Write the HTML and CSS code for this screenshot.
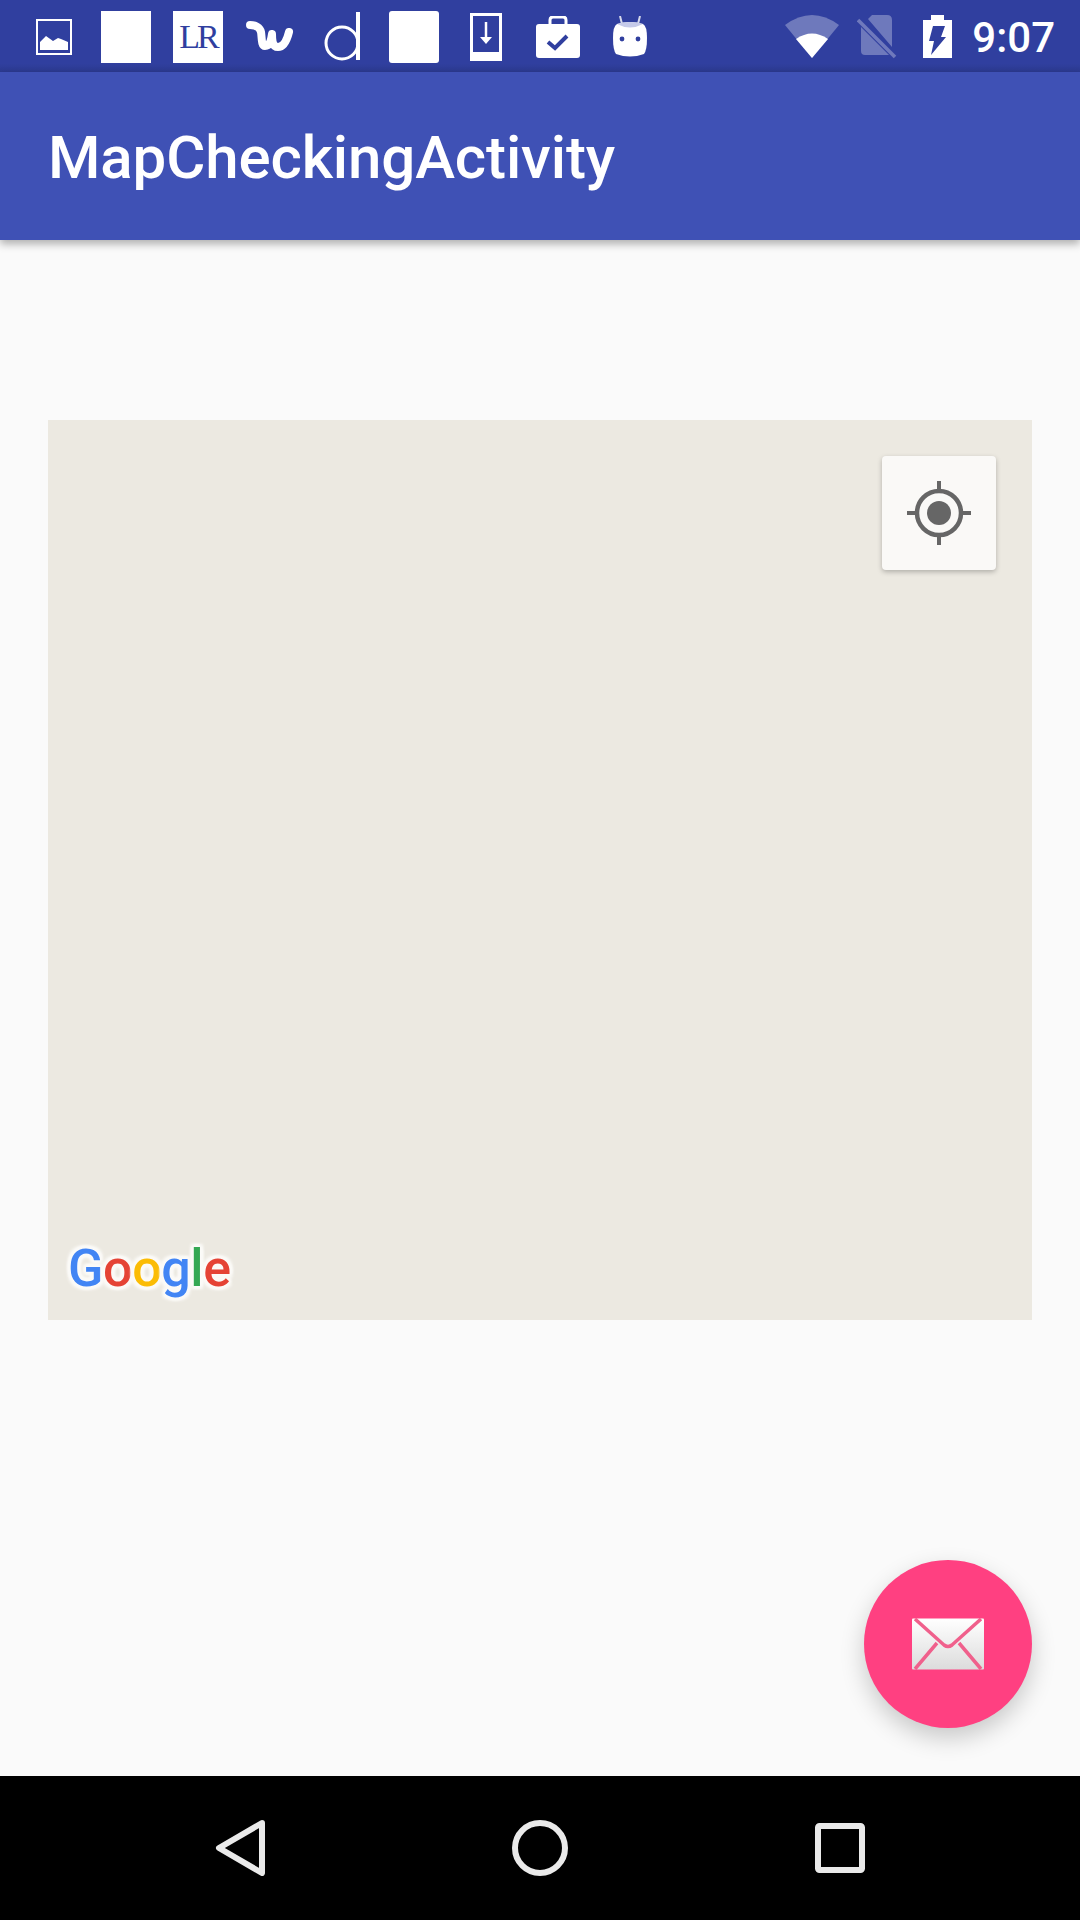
FILE: index.html
```html
<!DOCTYPE html>
<html>
<head>
    <meta charset="utf-8">
    <meta name="viewport" content="width=device-width, initial-scale=1.0">
    <title>MapCheckingActivity</title>
    <link rel="stylesheet" href="styles.css">
</head>
<body>
<div class="status-bar">
    <div class="notifications">
        <div class="slot">
            <svg width="36" height="36" viewBox="0 0 36 36"><path d="M1 1h34v34H1z" fill="none" stroke="#fff" stroke-width="2"/><path d="M4 31V23l6-6 7 5 5-3 3 1 7 3v8z" fill="#fff"/></svg>
        </div>
        <div class="slot"><div class="blank"></div></div>
        <div class="slot"><div class="blank lr">LR</div></div>
        <div class="slot">
            <svg width="48" height="36" viewBox="0 0 48 36"><path d="M4 6c5 0 10 2 11 7 1 5 0 14 4 14 5 0 6-5 7-12 0 6 0 13 6 13 6 0 9-7 11-15" fill="none" stroke="#fff" stroke-width="8" stroke-linecap="round" stroke-linejoin="round"/></svg>
        </div>
        <div class="slot">
            <svg width="36" height="50" viewBox="0 0 36 50"><circle cx="18" cy="31" r="16" fill="none" stroke="#fff" stroke-width="3"/><path d="M34 0v48" stroke="#fff" stroke-width="4"/></svg>
        </div>
        <div class="slot"><div class="blank rounded"></div></div>
        <div class="slot">
            <svg width="32" height="48" viewBox="0 0 32 48"><path fill-rule="evenodd" d="M0 0h32v48H0zM3 3v36h26V3z" fill="#fff"/><path d="M16 9v18" stroke="#fff" stroke-width="2.5"/><path d="M10 24h12l-6 7z" fill="#fff"/></svg>
        </div>
        <div class="slot">
            <svg width="44" height="42" viewBox="0 0 44 42"><path d="M14 9V4q0-3 3-3h10q3 0 3 3v5" fill="none" stroke="#fff" stroke-width="3"/><path d="M3 8h38q3 0 3 3v28q0 3-3 3H3q-3 0-3-3V11q0-3 3-3z" fill="#fff"/><path d="M12 26l7 6 12-12" fill="none" stroke="#303f9f" stroke-width="4"/></svg>
        </div>
        <div class="slot">
            <svg width="34" height="42" viewBox="0 0 34 42"><path d="M7 0l2 8M27 0l-2 8" stroke="#fff" stroke-width="2" opacity=".8"/><path d="M4 8q13-4 26 0 4 2 4 14 0 12-3 16-14 5-28 0-3-4-3-16 0-12 4-14z" fill="#fff"/><path d="M4 8q13-4 26 0-13 7-26 0z" fill="#c5cae9"/><circle cx="9" cy="23" r="2.4" fill="#303f9f"/><circle cx="25" cy="23" r="2.4" fill="#303f9f"/></svg>
        </div>
    </div>
    <div class="system-icons">
        <svg class="wifi" width="54" height="44" viewBox="0 0 54 44"><path d="M0 10Q27-10 54 10L27 43z" fill="#fff" opacity=".3"/><path d="M11 24Q27 13 43 24L27 43z" fill="#fff"/></svg>
        <svg class="sim" width="40" height="44" viewBox="0 0 40 44"><path d="M11 4l4-4h15q5 0 5 5v27zM4 12l28 28H8q-4 0-4-4z" fill="#fff" opacity=".3"/><path d="M1 5l37 37" stroke="#fff" stroke-width="3.5" opacity=".3"/></svg>
        <svg class="battery" width="29" height="44" viewBox="0 0 29 44"><path fill-rule="evenodd" d="M8 0h13v5h8v38H0V5h8zM10 11h12l-4 11h5L8 40l3-14H6z" fill="#fff"/></svg>
        <span class="clock">9:07</span>
    </div>
</div>
<div class="app-bar">MapCheckingActivity</div>
<div class="content">
    <div class="map">
        <div class="location-btn">
            <svg width="64" height="64" viewBox="0 0 64 64"><circle cx="32" cy="32" r="22" fill="none" stroke="#666" stroke-width="4.5"/><circle cx="32" cy="32" r="12" fill="#666"/><path d="M32 0v10M32 54v10M0 32h10M54 32h10" stroke="#666" stroke-width="4"/></svg>
        </div>
        <div class="google"><span class="blue">G</span><span class="red">o</span><span class="yellow">o</span><span class="blue">g</span><span class="green">l</span><span class="red">e</span></div>
    </div>
    <button class="fab">
        <svg class="envelope" width="72" height="52" viewBox="0 0 72 52">
            <defs><linearGradient id="env" x1="0" y1="0" x2="0" y2="1"><stop offset="0" stop-color="#fff"/><stop offset="1" stop-color="#dcdcdc"/></linearGradient></defs>
            <rect width="72" height="51" y="0.5" rx="1" fill="url(#env)"/>
            <path d="M3 1l29 26q4 3 8 0L69 1M3 51l22-26M69 51L47 25" fill="none" stroke="#f0608c" stroke-width="3.5"/>
        </svg>
    </button>
</div>
<div class="nav-bar">
    <div class="nav-slot">
        <svg width="50" height="56" viewBox="0 0 50 56"><path d="M47 3L4 28l43 25z" fill="none" stroke="#eaeaea" stroke-width="6" stroke-linejoin="round"/></svg>
    </div>
    <div class="nav-slot">
        <svg width="56" height="56" viewBox="0 0 56 56"><circle cx="28" cy="28" r="25" fill="none" stroke="#eaeaea" stroke-width="6"/></svg>
    </div>
    <div class="nav-slot">
        <svg width="50" height="50" viewBox="0 0 50 50"><rect x="3" y="3" width="44" height="44" rx="1.5" fill="none" stroke="#eaeaea" stroke-width="6"/></svg>
    </div>
</div>
</body>
</html>
```

FILE: styles.css
```css
/* Page frame */
html, body {
    margin: 0;
    height: 100%;
}
body {
    display: flex;
    flex-direction: column;
    height: 1920px;
    font-family: Roboto, "Liberation Sans", sans-serif;
    background: #fafafa;
    overflow: hidden;
}
/* Status bar */
.status-bar {
    display: flex;
    justify-content: space-between;
    align-items: center;
    height: 72px;
    padding: 2px 25px 0 18px;
    box-sizing: border-box;
    background: linear-gradient(#303f9f 88%, #2c3a90);
    flex-shrink: 0;
}
.notifications {
    display: flex;
    align-items: center;
}
.slot {
    display: flex;
    justify-content: center;
    align-items: center;
    width: 72px;
    height: 52px;
}
.blank {
    width: 50px;
    height: 52px;
    background: #fff;
}
.blank.rounded {
    border-radius: 3px;
}
.lr {
    font-family: "Liberation Serif", serif;
    font-size: 34px;
    line-height: 52px;
    text-align: center;
    color: #303f9f;
    letter-spacing: -3px;
}
.system-icons {
    display: flex;
    align-items: center;
}
.sim {
    margin-left: 18px;
}
.battery {
    margin-left: 26px;
}
.clock {
    margin-left: 20px;
    font-size: 42px;
    font-weight: 500;
    color: #fff;
}
/* App bar */
.app-bar {
    position: relative;
    height: 168px;
    padding-left: 48px;
    line-height: 172px;
    font-size: 60px;
    font-weight: 500;
    letter-spacing: -0.12px;
    color: #fff;
    background: #3f51b5;
    box-shadow: 0 4px 8px rgba(0, 0, 0, 0.3);
    flex-shrink: 0;
}
/* Map area */
.content {
    position: relative;
    flex: 1;
    padding: 180px 48px 0;
}
.map {
    position: relative;
    height: 900px;
    background: #ece9e1;
}
.location-btn {
    position: absolute;
    top: 36px;
    right: 36px;
    display: flex;
    justify-content: center;
    align-items: center;
    width: 114px;
    height: 114px;
    background: #faf9f7;
    border-radius: 4px;
    box-shadow: 0 2px 5px rgba(0, 0, 0, 0.25);
}
.google {
    position: absolute;
    left: 20px;
    bottom: 21px;
    font-size: 52px;
    font-weight: 500;
    line-height: 60px;
    letter-spacing: -0.4px;
    text-shadow: 0 0 2px #fff, 3px 0 2px #fbfaf7, -3px 0 2px #fbfaf7, 0 3px 2px #fbfaf7, 0 -3px 2px #fbfaf7, 3px 3px 3px #fbfaf7, -3px -3px 3px #fbfaf7, 3px -3px 3px #fbfaf7, -3px 3px 3px #fbfaf7;
}
.blue { color: #4285f4; }
.red { color: #e54335; }
.yellow { color: #fbbc05; }
.green { color: #34a853; }
/* Floating button */
.fab {
    position: absolute;
    right: 48px;
    bottom: 48px;
    display: flex;
    justify-content: center;
    align-items: center;
    width: 168px;
    height: 168px;
    padding: 0;
    border: none;
    border-radius: 50%;
    background: #ff4081;
    box-shadow: 0 10px 24px rgba(0, 0, 0, 0.2);
}
.envelope {
    filter: blur(0.6px);
}
/* Bottom navigation */
.nav-bar {
    display: flex;
    justify-content: center;
    align-items: center;
    height: 144px;
    background: #000;
    flex-shrink: 0;
}
.nav-slot {
    display: flex;
    justify-content: center;
    width: 300px;
}
```
